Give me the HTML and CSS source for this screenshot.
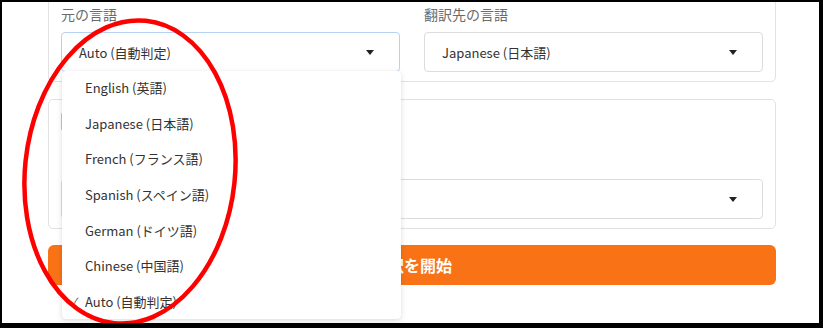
FILE: index.html
```html
<!DOCTYPE html>
<html lang="ja">
<head>
<meta charset="utf-8">
<link rel="stylesheet" href="styles.css">
</head>
<body>
<div class="frame">
  <div class="main">
    <section class="card lang-card">
      <div class="field">
        <div class="label">元の言語</div>
        <div class="select focused"><span>Auto (自動判定)</span><i class="caret"></i></div>
      </div>
      <div class="field">
        <div class="label">翻訳先の言語</div>
        <div class="select"><span>Japanese (日本語)</span><i class="caret"></i></div>
      </div>
    </section>
    <section class="card opt-card">
      <div class="label-stub"></div>
      <div class="hint-dot"></div>
      <div class="select"><span></span><i class="caret"></i></div>
    </section>
    <button class="start">翻訳を開始</button>
  </div>

  <ul class="menu">
    <li>English (英語)</li>
    <li>Japanese (日本語)</li>
    <li>French (フランス語)</li>
    <li>Spanish (スペイン語)</li>
    <li>German (ドイツ語)</li>
    <li>Chinese (中国語)</li>
    <li class="checked"><span class="check">✓</span>Auto (自動判定)</li>
  </ul>

  <svg class="mark" viewBox="0 0 823 328" width="823" height="328">
    <ellipse cx="130" cy="172" rx="105" ry="152" transform="rotate(6 130 172)" fill="none" stroke="#ff0000" stroke-width="4.5"/>
  </svg>
</div>
</body>
</html>
```

FILE: styles.css
```css
* { box-sizing: border-box; }
html, body { margin: 0; padding: 0; background: #000; }
body { font-family: "Noto Sans CJK JP", "Noto Sans", sans-serif; color: #333; }

.frame {
  position: relative;
  width: 823px;
  height: 328px;
  background: #fff;
  border-style: solid;
  border-color: #000;
  border-width: 2px 4px 5px 2px;
  overflow: hidden;
}

.main {
  padding: 0 43px 0 46px;
}

.card {
  border: 1px solid #e2e2e2;
  border-radius: 5px;
  background: #fff;
}

.lang-card {
  margin-top: -11px;
  padding: 12px 12px 9px 12px;
  display: grid;
  grid-template-columns: 1fr 1fr;
  column-gap: 24px;
}

.field { display: flex; flex-direction: column; gap: 8px; }

.label {
  font-size: 14px;
  line-height: 20px;
  color: #6b6b6b;
}

.select {
  height: 40px;
  border: 1px solid #dcdcdc;
  border-radius: 4px;
  display: flex;
  align-items: center;
  justify-content: space-between;
  padding: 0 25px 0 17px;
  font-size: 13px;
  color: #333;
  background: #fff;
}
.select.focused { border-color: #b5d1f3; }

.caret {
  width: 0; height: 0;
  border-left: 4.5px solid transparent;
  border-right: 4.5px solid transparent;
  border-top: 5px solid #222;
}

.opt-card {
  margin-top: 17px;
  padding: 12px 12px 9px 12px;
  display: flex;
  flex-direction: column;
}
.label-stub {
  width: 2px;
  height: 17px;
  margin-top: 1px;
  background: #c8c8c8;
  border-radius: 1px;
}
.hint-dot {
  width: 2px;
  height: 3px;
  margin-top: 26px;
  margin-left: 1px;
  background: #f3c9a8;
}
.opt-card .select { margin-top: 20px; }

.start {
  display: block;
  width: 100%;
  height: 40px;
  margin-top: 16px;
  border: 0;
  border-radius: 6px;
  background: #f97316;
  color: #fff;
  font-family: "Noto Sans CJK JP", sans-serif;
  font-weight: 700;
  font-size: 16px;
  padding: 0;
}

.menu {
  position: absolute;
  left: 60px;
  top: 69px;
  width: 339px;
  margin: 0;
  padding: 0;
  list-style: none;
  background: #fff;
  border-radius: 4px;
  box-shadow: 0 2px 6px rgba(0,0,0,0.12), 0 0 1px rgba(0,0,0,0.12);
  z-index: 2;
}
.menu li {
  position: relative;
  height: 35.6px;
  display: flex;
  align-items: center;
  padding-left: 23px;
  font-size: 13px;
  color: #333;
}
.menu li:first-child { margin-top: -1px; }
.check {
  position: absolute;
  left: 9px;
  font-size: 11px;
  color: #555;
}

.mark {
  position: absolute;
  left: -2px;
  top: -2px;
  z-index: 3;
  pointer-events: none;
}
```
